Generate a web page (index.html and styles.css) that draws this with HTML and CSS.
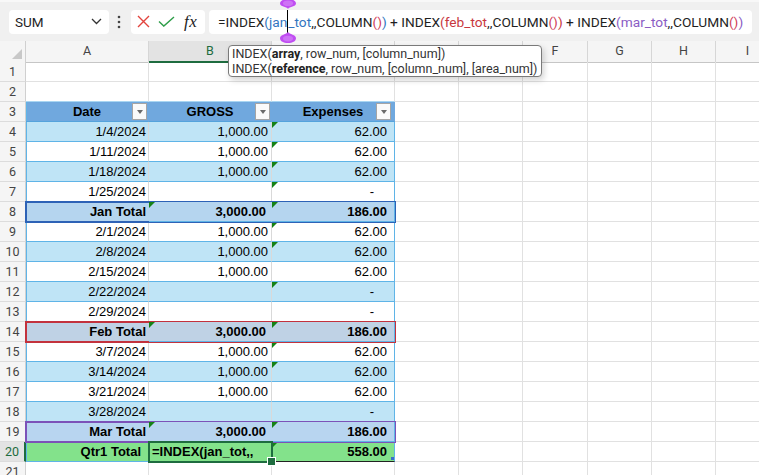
FILE: index.html
```html
<!DOCTYPE html>
<html>
<head>
<meta charset="utf-8">
<link rel="stylesheet" href="styles.css">
</head>
<body>
<div class="topbar">
  <div class="namebox"><span>SUM</span><svg class="chev" width="11" height="7" viewBox="0 0 11 7"><path d="M1 1l4.5 4.5L10 1" fill="none" stroke="#333" stroke-width="1.3"/></svg></div>
  <svg class="kebab" width="4" height="14" viewBox="0 0 4 14"><circle cx="2" cy="2" r="1.3" fill="#444"/><circle cx="2" cy="7" r="1.3" fill="#444"/><circle cx="2" cy="12" r="1.3" fill="#444"/></svg>
  <div class="fxbtns">
    <svg width="13" height="13" viewBox="0 0 13 13"><path d="M1 1L12 12M12 1L1 12" stroke="#e2433d" stroke-width="1.4" fill="none"/></svg>
    <svg width="17" height="11" viewBox="0 0 17 11"><path d="M1 5.5l4.8 4.6L16 1" fill="none" stroke="#2f9e4a" stroke-width="1.4"/></svg>
    <span class="fx">fx</span>
  </div>
  <div class="formula">
    <span class="ft">=INDEX<span class="rb">(jan</span></span><span class="caret"><svg class="h-top" width="16" height="10" viewBox="0 0 16 10"><path d="M8 10C6.5 7.5 0 8 0 4.6C0 1.6 3.6 0 8 0C12.4 0 16 1.6 16 4.6C16 8 9.5 7.5 8 10Z" fill="#c04ef2"/><ellipse cx="8" cy="4.3" rx="5" ry="2.8" fill="#d78af8" opacity="0.6"/></svg><svg class="h-bot" width="16" height="11" viewBox="0 0 16 11"><path d="M8 0C6.5 2.5 0 2.5 0 6.2C0 9.3 3.6 11 8 11C12.4 11 16 9.3 16 6.2C16 2.5 9.5 2.5 8 0Z" fill="#c04ef2"/><ellipse cx="8" cy="6.6" rx="5" ry="2.8" fill="#d78af8" opacity="0.6"/></svg></span><span class="ft"><span class="rb">_tot</span>,,COLUMN<span class="pp">()</span><span class="rb">)</span> + INDEX<span class="rr">(feb_tot</span>,,COLUMN<span class="pp">()</span><span class="rr">)</span> + INDEX<span class="rp">(mar_tot</span>,,COLUMN<span class="pp">()</span><span class="rp">)</span></span>
  </div>
</div>

<div class="sheet">
  <div class="row hrow">
    <div class="corner"><svg width="10" height="10" viewBox="0 0 10 10"><path d="M10 0V10H0Z" fill="#c8c8c8"/></svg></div>
    <div class="tp"><div class="ch">A</div><div class="ch sel">B</div><div class="ch">C</div></div>
    <div class="ch">D</div><div class="ch">E</div><div class="ch">F</div><div class="ch">G</div><div class="ch">H</div><div class="ch">I</div>
  </div>

  <div class="row"><div class="rh">1</div><div class="tp"><div class="c"></div><div class="c"></div><div class="c"></div></div><div class="c"></div><div class="c"></div><div class="c"></div><div class="c"></div><div class="c"></div><div class="c"></div></div>
  <div class="row"><div class="rh">2</div><div class="tp above"><div class="c"></div><div class="c"></div><div class="c"></div></div><div class="c"></div><div class="c"></div><div class="c"></div><div class="c"></div><div class="c"></div><div class="c"></div></div>

  <div class="row"><div class="rh">3</div><div class="tp tb thead"><div class="c hd"><span>Date</span><i class="fb"></i></div><div class="c hd"><span>GROSS</span><i class="fb"></i></div><div class="c hd"><span>Expenses</span><i class="fb"></i></div></div><div class="c"></div><div class="c"></div><div class="c"></div><div class="c"></div><div class="c"></div><div class="c"></div></div>

  <div class="row"><div class="rh">4</div><div class="tp tb bd"><div class="c">1/4/2024</div><div class="c">1,000.00</div><div class="c tri">62.00</div></div><div class="c"></div><div class="c"></div><div class="c"></div><div class="c"></div><div class="c"></div><div class="c"></div></div>
  <div class="row"><div class="rh">5</div><div class="tp tb wt"><div class="c">1/11/2024</div><div class="c">1,000.00</div><div class="c tri">62.00</div></div><div class="c"></div><div class="c"></div><div class="c"></div><div class="c"></div><div class="c"></div><div class="c"></div></div>
  <div class="row"><div class="rh">6</div><div class="tp tb bd"><div class="c">1/18/2024</div><div class="c">1,000.00</div><div class="c tri">62.00</div></div><div class="c"></div><div class="c"></div><div class="c"></div><div class="c"></div><div class="c"></div><div class="c"></div></div>
  <div class="row"><div class="rh">7</div><div class="tp tb wt"><div class="c">1/25/2024</div><div class="c"></div><div class="c tri dash">-</div></div><div class="c"></div><div class="c"></div><div class="c"></div><div class="c"></div><div class="c"></div><div class="c"></div></div>
  <div class="row"><div class="rh">8</div><div class="tp tb tot tj"><div class="c">Jan Total</div><div class="c tri">3,000.00</div><div class="c tri">186.00</div></div><div class="c"></div><div class="c"></div><div class="c"></div><div class="c"></div><div class="c"></div><div class="c"></div></div>
  <div class="row"><div class="rh">9</div><div class="tp tb wt"><div class="c">2/1/2024</div><div class="c">1,000.00</div><div class="c tri">62.00</div></div><div class="c"></div><div class="c"></div><div class="c"></div><div class="c"></div><div class="c"></div><div class="c"></div></div>
  <div class="row"><div class="rh">10</div><div class="tp tb bd"><div class="c">2/8/2024</div><div class="c">1,000.00</div><div class="c tri">62.00</div></div><div class="c"></div><div class="c"></div><div class="c"></div><div class="c"></div><div class="c"></div><div class="c"></div></div>
  <div class="row"><div class="rh">11</div><div class="tp tb wt"><div class="c">2/15/2024</div><div class="c">1,000.00</div><div class="c">62.00</div></div><div class="c"></div><div class="c"></div><div class="c"></div><div class="c"></div><div class="c"></div><div class="c"></div></div>
  <div class="row"><div class="rh">12</div><div class="tp tb bd"><div class="c">2/22/2024</div><div class="c"></div><div class="c tri dash">-</div></div><div class="c"></div><div class="c"></div><div class="c"></div><div class="c"></div><div class="c"></div><div class="c"></div></div>
  <div class="row"><div class="rh">13</div><div class="tp tb wt"><div class="c">2/29/2024</div><div class="c"></div><div class="c dash">-</div></div><div class="c"></div><div class="c"></div><div class="c"></div><div class="c"></div><div class="c"></div><div class="c"></div></div>
  <div class="row"><div class="rh">14</div><div class="tp tb tot tf"><div class="c">Feb Total</div><div class="c tri">3,000.00</div><div class="c tri">186.00</div></div><div class="c"></div><div class="c"></div><div class="c"></div><div class="c"></div><div class="c"></div><div class="c"></div></div>
  <div class="row"><div class="rh">15</div><div class="tp tb wt"><div class="c">3/7/2024</div><div class="c">1,000.00</div><div class="c tri">62.00</div></div><div class="c"></div><div class="c"></div><div class="c"></div><div class="c"></div><div class="c"></div><div class="c"></div></div>
  <div class="row"><div class="rh">16</div><div class="tp tb bd"><div class="c">3/14/2024</div><div class="c">1,000.00</div><div class="c tri">62.00</div></div><div class="c"></div><div class="c"></div><div class="c"></div><div class="c"></div><div class="c"></div><div class="c"></div></div>
  <div class="row"><div class="rh">17</div><div class="tp tb wt"><div class="c">3/21/2024</div><div class="c">1,000.00</div><div class="c">62.00</div></div><div class="c"></div><div class="c"></div><div class="c"></div><div class="c"></div><div class="c"></div><div class="c"></div></div>
  <div class="row"><div class="rh">18</div><div class="tp tb bd"><div class="c">3/28/2024</div><div class="c"></div><div class="c dash">-</div></div><div class="c"></div><div class="c"></div><div class="c"></div><div class="c"></div><div class="c"></div><div class="c"></div></div>
  <div class="row"><div class="rh">19</div><div class="tp tb tot tm"><div class="c">Mar Total</div><div class="c tri">3,000.00</div><div class="c tri">186.00</div></div><div class="c"></div><div class="c"></div><div class="c"></div><div class="c"></div><div class="c"></div><div class="c"></div></div>
  <div class="row"><div class="rh sel">20</div><div class="tp tb tot tq"><div class="c">Qtr1 Total</div><div class="c edit">=INDEX(jan_tot,,</div><div class="c tri last">558.00</div></div><div class="c"></div><div class="c"></div><div class="c"></div><div class="c"></div><div class="c"></div><div class="c"></div></div>
  <div class="row"><div class="rh">21</div><div class="tp"><div class="c"></div><div class="c"></div><div class="c"></div></div><div class="c"></div><div class="c"></div><div class="c"></div><div class="c"></div><div class="c"></div><div class="c"></div></div>
</div>

<div class="tip">
  <div>INDEX(<b>array</b>, row_num, [column_num])</div>
  <div>INDEX(<b>reference</b>, row_num, [column_num], [area_num])</div>
</div>
</body>
</html>
```

FILE: styles.css
```css
* { box-sizing: border-box; }
html, body { margin: 0; padding: 0; }
body {
  width: 759px;
  height: 475px;
  overflow: hidden;
  background: #ffffff;
  position: relative;
  font-family: "Liberation Sans", Arial, sans-serif;
}

/* ---------- formula bar ---------- */
.topbar {
  height: 41px;
  background: #f0f0f0;
  border-top: 2px solid #f8f8f8;
  display: flex;
  align-items: center;
  padding-left: 9px;
  position: relative;
  z-index: 3;
}
.namebox {
  width: 100px;
  height: 24px;
  background: #fff;
  border-radius: 4px;
  display: flex;
  align-items: center;
  justify-content: space-between;
  padding: 0 7px 0 6px;
  font: 13.5px Roboto, "Open Sans", sans-serif;
  color: #1f1f1f;
}
.kebab { margin-left: 8px; }
.fxbtns {
  margin-left: 10px;
  width: 74px;
  height: 24px;
  background: #fff;
  border-radius: 4px;
  display: flex;
  align-items: center;
  padding-left: 6px;
  gap: 8px;
}
.fx {
  font: italic 17px "Liberation Serif", "DejaVu Serif", serif;
  color: #222;
  letter-spacing: 0.5px;
  margin-left: 1px;
}
.formula {
  margin-left: 4px;
  width: 543px;
  height: 24px;
  background: #fff;
  border-radius: 4px;
  display: flex;
  align-items: center;
  padding-left: 9px;
  font: 13.7px Roboto, "Open Sans", sans-serif;
  color: #1f1f1f;
}
.ft { white-space: pre; }
.rb { color: #3275c0; }
.rr { color: #c8373e; }
.rp { color: #8a5cc4; }
.pp { color: #d0405a; }
.caret {
  align-self: stretch;
  width: 0;
  border-left: 1px solid #000;
  position: relative;
}
.h-top { position: absolute; left: -8.5px; top: -11px; }
.h-bot { position: absolute; left: -8.5px; top: 22px; }

/* ---------- sheet ---------- */
.sheet {
  height: 434px;
  overflow: hidden;
  display: flex;
  flex-direction: column;
}
.row {
  display: grid;
  grid-template-columns: 26px 369px 64px 64px 65px 64px 64px 64px;
  height: 20px;
  flex: none;
}
.row.hrow { height: 21px; }
.tp {
  display: grid;
  grid-template-columns: 123px 123px 123px;
}

.corner {
  background: #f5f5f5;
  border-right: 1px solid #d0d0d0;
  border-bottom: 1px solid #c6c6c6;
  display: flex;
  align-items: flex-end;
  justify-content: flex-end;
  padding: 0 3px 3px 0;
}
.ch {
  background: #f5f5f5;
  border-right: 1px solid #d6d6d6;
  border-bottom: 1px solid #c6c6c6;
  text-align: center;
  font: 12.5px/20px Roboto, "Open Sans", sans-serif;
  color: #444;
}
.ch.sel {
  background: #e3e3e3;
  color: #1e6c3f;
  border-bottom: 2px solid #1e6c3f;
}
.rh {
  background: #f5f5f5;
  border-right: 1px solid #d0d0d0;
  border-bottom: 1px solid #dcdcdc;
  text-align: center;
  font: 12.5px/19px Roboto, "Open Sans", sans-serif;
  color: #444;
}
.rh.sel {
  background: #e3e3e3;
  color: #1e6c3f;
  border-right: 2px solid #1e6c3f;
}

.c {
  border-right: 1px solid #e1e1e1;
  border-bottom: 1px solid #e1e1e1;
  font-size: 13px;
  line-height: 19px;
  color: #000;
  white-space: nowrap;
  overflow: hidden;
  text-align: right;
  padding: 0 2px;
}
.above > .c { border-bottom-color: #a9d6f2; }

/* table body */
.tb > .c {
  border-bottom-color: #5fb4e7;
  border-right-color: #d9d9d9;
}
.tb > .c:first-child { box-shadow: inset 1px 0 #5fb4e7; padding-right: 2px; }
.tb > .c:nth-child(2) { padding-right: 3px; }
.tb > .c:last-child { border-right-color: #5fb4e7; padding-right: 7px; }
.tb > .c.dash { padding-right: 20px; }
.bd > .c { background: #bfe4f6; }
.wt > .c { background: #ffffff; }

.thead > .c { border-bottom-color: #55a3dc; }
.hd {
  background: #70a8de;
  border-right-color: #70a8de !important;
  font-weight: bold;
  display: grid;
  padding: 0 !important;
}
.hd > span { grid-area: 1 / 1; justify-self: center; }
.hd .fb {
  grid-area: 1 / 1;
  justify-self: end;
  align-self: center;
  width: 15px;
  height: 17px;
  margin-right: 1px;
  background: #fafafa;
  border: 1px solid #a5a5a5;
  display: flex;
  align-items: center;
  justify-content: center;
}
.hd:last-child .fb { margin-right: 3px; }
.fb::after {
  content: "";
  border-left: 3.5px solid transparent;
  border-right: 3.5px solid transparent;
  border-top: 4px solid #6a6a6a;
}

/* totals */
.tot > .c { font-weight: bold; }
.tot > .c:nth-child(2) { padding-right: 5px; }
.tj > .c { background: #b5d5ef; border-right-color: #b5d5ef; }
.tf > .c { background: #bfd2e5; border-right-color: #bfd2e5; }
.tm > .c { background: #b8d5f0; border-right-color: #b8d5f0; }
.tj, .tf, .tm { position: relative; z-index: 1; outline-offset: -1px; }
.tj { outline: 2px solid #2d62b6; }
.tf { outline: 2px solid #c3323d; }
.tm { outline: 2px solid #7c52b8; }

.tq > .c { background: #83e28b; border-right-color: #83e28b; }
.tq > .c:first-child { padding-right: 7px; }
.tq > .c.edit {
  text-align: left;
  padding-left: 3px;
  outline: 2px solid #1e6c3f;
  outline-offset: -1px;
  position: relative;
  z-index: 2;
  overflow: visible;
}
.edit::after {
  content: "";
  position: absolute;
  right: -5px;
  bottom: -5px;
  width: 7px;
  height: 7px;
  background: #1e6c3f;
  border: 1px solid #fff;
}
.tq > .c.last { border-bottom-color: #222; border-right-color: #5fb4e7; }
.last::after {
  content: "";
  position: absolute;
  right: 0;
  bottom: 1px;
  width: 3px;
  height: 3px;
  background: #3a6fc8;
}

/* error indicator triangles */
.tri { position: relative; }
.tri::before {
  content: "";
  position: absolute;
  left: 0;
  top: 0;
  border-top: 6px solid #168216;
  border-right: 6px solid transparent;
}

/* ---------- tooltip ---------- */
.tip {
  position: absolute;
  left: 228px;
  top: 45px;
  width: 314px;
  height: 32px;
  background: #fff;
  border: 1px solid #7a7a7a;
  border-radius: 4px;
  box-shadow: 2px 3px 6px rgba(0,0,0,0.18);
  padding: 0 3px;
  font: 12.5px/15px Roboto, "Open Sans", sans-serif;
  color: #333;
  z-index: 5;
  white-space: nowrap;
}
.tip b { font-weight: bold; color: #222; }
```
